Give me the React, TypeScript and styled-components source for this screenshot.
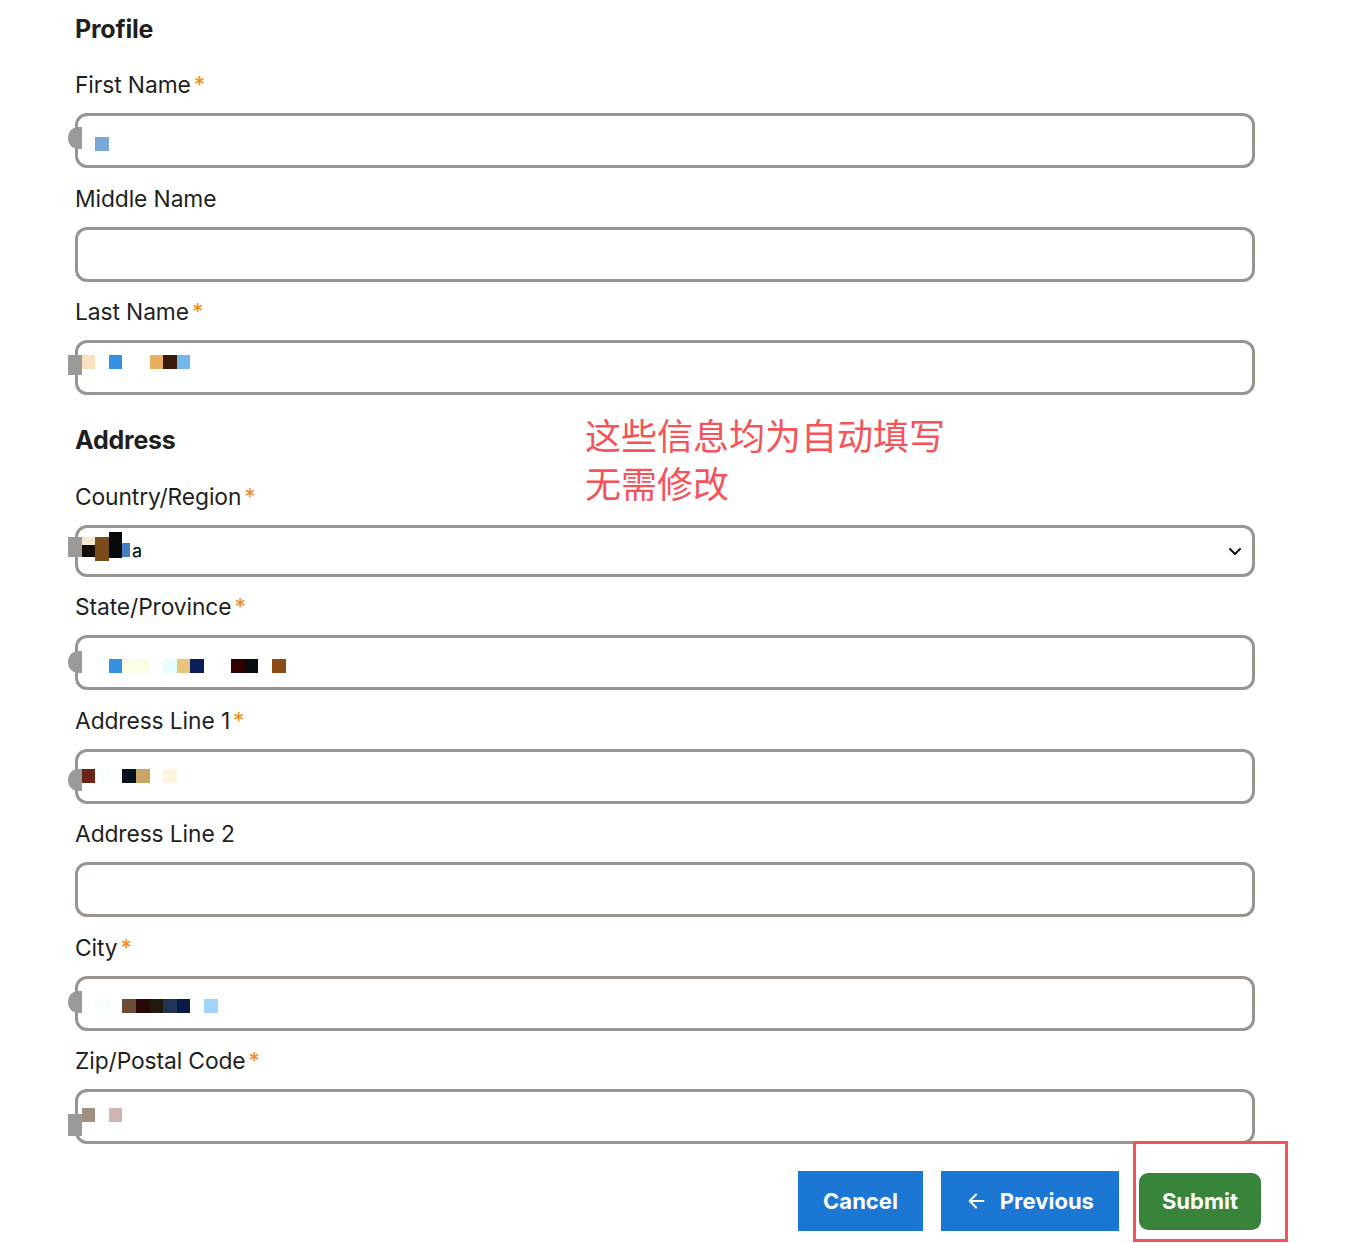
import React from "react";
import styled, { createGlobalStyle } from "styled-components";

const GlobalStyle = createGlobalStyle`
  html, body {
    margin: 0;
    padding: 0;
    background: #ffffff;
  }
  body {
    font-family: Inter, "Noto Sans", sans-serif;
    color: #1f1f1f;
  }
`;

const Page = styled.div`
  position: relative;
  width: 1360px;
  min-height: 1243px;
  box-sizing: border-box;
  padding: 14px 0 0 75px;
`;

const Form = styled.form`
  width: 1180px;
  display: flex;
  flex-direction: column;
`;

const SectionTitle = styled.h2<{ $top?: number; $bottom?: number }>`
  margin: ${(p) => p.$top ?? 0}px 0 ${(p) => p.$bottom ?? 27}px;
  font-size: 25px;
  font-weight: 700;
  line-height: 30px;
  letter-spacing: -0.2px;
`;

const FieldList = styled.div`
  display: flex;
  flex-direction: column;
  gap: 16.5px;
`;

const Field = styled.div`
  display: flex;
  flex-direction: column;
`;

const Label = styled.label`
  font-size: 22.8px;
  line-height: 28px;
  margin-bottom: 14px;
  letter-spacing: -0.1px;
`;

const Required = styled.span`
  color: #f28c0f;
  margin-left: 3px;
`;

const InputWrap = styled.div`
  position: relative;
`;

const TextInput = styled.input`
  display: block;
  width: 100%;
  height: 55px;
  box-sizing: border-box;
  border: 3px solid #9a948f;
  border-radius: 12px;
  background: #fff;
  font: inherit;
  font-size: 18px;
  padding: 0 16px;
  outline: none;
`;

const Select = styled.select`
  display: block;
  width: 100%;
  height: 52px;
  box-sizing: border-box;
  border: 3px solid #9a948f;
  border-radius: 12px;
  background: #fff;
  appearance: none;
  font-family: Inter, sans-serif;
  font-size: 18px;
  color: #000;
  padding: 0 0 0 54px;
  outline: none;
`;

const Chevron = styled.svg`
  position: absolute;
  right: 12px;
  top: 50%;
  transform: translateY(-50%);
  pointer-events: none;
`;

/* mosaic blur left over the auto-filled values, laid over the input */
const Mosaic = styled.div<{ $top: number }>`
  position: absolute;
  left: -7px;
  top: ${(p) => p.$top}px;
  display: flex;
  align-items: flex-start;
  pointer-events: none;
`;

const Cell = styled.span<{ $c?: string; $h?: number; $w?: number }>`
  flex: none;
  width: ${(p) => p.$w ?? 13.6}px;
  height: ${(p) => p.$h ?? 14}px;
  background: ${(p) => p.$c ?? "transparent"};
`;

const Nub = styled.span<{ $round?: boolean; $shift: number; $h: number }>`
  flex: none;
  width: 13.6px;
  height: ${(p) => p.$h}px;
  margin-top: ${(p) => p.$shift}px;
  background: #9c9a98;
  border-radius: ${(p) => (p.$round ? "10px 0 0 10px" : "0")};
`;

const Stack = styled.span<{ $shift?: number }>`
  flex: none;
  display: flex;
  flex-direction: column;
  margin-top: ${(p) => p.$shift ?? 0}px;
`;

const Actions = styled.div`
  position: relative;
  display: flex;
  justify-content: flex-end;
  align-items: center;
  gap: 18px;
  margin: 27px -6px 0 0;
`;

const Button = styled.button<{ $variant: "blue" | "green" }>`
  display: inline-flex;
  align-items: center;
  justify-content: center;
  gap: 12px;
  height: ${(p) => (p.$variant === "green" ? 57 : 60)}px;
  padding: 0 ${(p) => (p.$variant === "green" ? 23 : 25)}px;
  border: none;
  border-radius: ${(p) => (p.$variant === "green" ? "9px" : "0")};
  background: ${(p) => (p.$variant === "green" ? "#38843b" : "#1b77d3")};
  color: #fff;
  font-family: Inter, sans-serif;
  font-size: 22px;
  font-weight: 700;
  margin-left: ${(p) => (p.$variant === "green" ? 2 : 0)}px;
  cursor: pointer;
`;

const Highlight = styled.div`
  position: absolute;
  right: -27px;
  top: -30px;
  width: 155px;
  height: 101px;
  box-sizing: border-box;
  border: 3px solid #f5535a;
  pointer-events: none;
`;

const Note = styled.div`
  position: absolute;
  left: 585px;
  top: 410px;
  color: #f5535a;
  font-family: "Noto Sans CJK SC", sans-serif;
  font-size: 36px;
  line-height: 48px;
  white-space: pre;
`;

type Blur = {
  top: number;
  nub: { shift: number; h: number; round?: boolean };
  cells: Record<number, string>;
};

type FieldDef = {
  label: string;
  required?: boolean;
  select?: boolean;
  blur?: Blur;
};

const profile: FieldDef[] = [
  {
    label: "First Name",
    required: true,
    blur: { top: 24, nub: { shift: -10, h: 22, round: true }, cells: { 2: "#77a8d8" } },
  },
  { label: "Middle Name" },
  {
    label: "Last Name",
    required: true,
    blur: {
      top: 15,
      nub: { shift: 0, h: 20 },
      cells: { 1: "#f8e0c0", 3: "#3590e0", 6: "#e6b060", 7: "#3a1a08", 8: "#70b8e8" },
    },
  },
];

const address: FieldDef[] = [
  { label: "Country/Region", required: true, select: true },
  {
    label: "State/Province",
    required: true,
    blur: {
      top: 24,
      nub: { shift: -8, h: 22, round: true },
      cells: {
        3: "#3590e0",
        4: "#fdfde6",
        5: "#fdfde6",
        7: "#e8fdfd",
        8: "#e8c47c",
        9: "#0a1e5c",
        12: "#300000",
        13: "#060c10",
        15: "#8a4c14",
      },
    },
  },
  {
    label: "Address Line 1",
    required: true,
    blur: {
      top: 20,
      nub: { shift: 0, h: 22, round: true },
      cells: { 1: "#6a2418", 2: "#f8feff", 4: "#06101e", 5: "#c8a468", 7: "#fdf4e0" },
    },
  },
  { label: "Address Line 2" },
  {
    label: "City",
    required: true,
    blur: {
      top: 23,
      nub: { shift: -8, h: 22, round: true },
      cells: {
        2: "#f8fdfd",
        4: "#6a4c34",
        5: "#2a0808",
        6: "#201808",
        7: "#203454",
        8: "#0a1a48",
        10: "#a0d4f8",
      },
    },
  },
  {
    label: "Zip/Postal Code",
    required: true,
    blur: {
      top: 19,
      nub: { shift: 6, h: 22 },
      cells: { 1: "#a09080", 3: "#d0b4b0" },
    },
  },
];

const BlurRow = ({ blur }: { blur: Blur }) => {
  const last = Math.max(...Object.keys(blur.cells).map(Number));
  const cols = Array.from({ length: last }, (_, i) => i + 1);
  return (
    <Mosaic $top={blur.top}>
      <Nub $round={blur.nub.round} $shift={blur.nub.shift} $h={blur.nub.h} />
      {cols.map((i) => (
        <Cell key={i} $c={blur.cells[i]} />
      ))}
    </Mosaic>
  );
};

const CountryBlur = () => (
  <Mosaic $top={12}>
    <Nub $shift={0} $h={20} />
    <Stack>
      <Cell $c="#f6e6d0" $h={8} />
      <Cell $c="#140c04" $h={12} />
    </Stack>
    <Cell $c="#7a4c1c" $h={24} />
    <Stack $shift={-5}>
      <Cell $c="#05090c" $h={26} />
    </Stack>
    <Stack $shift={6}>
      <Cell $c="#4280c0" $h={14} $w={8} />
    </Stack>
  </Mosaic>
);

const renderField = (f: FieldDef) => (
  <Field key={f.label}>
    <Label>
      {f.label}
      {f.required && <Required>*</Required>}
    </Label>
    <InputWrap>
      {f.select ? (
        <>
          <Select defaultValue="a">
            <option value="a">a</option>
          </Select>
          <Chevron width="16" height="16" viewBox="0 0 16 16" fill="none">
            <path d="M3 6l5 5 5-5" stroke="#111" strokeWidth="2" strokeLinecap="round" strokeLinejoin="round" />
          </Chevron>
          <CountryBlur />
        </>
      ) : (
        <>
          <TextInput type="text" />
          {f.blur && <BlurRow blur={f.blur} />}
        </>
      )}
    </InputWrap>
  </Field>
);

const App = () => {
  return (
    <>
      <GlobalStyle />
      <Page>
        <Form onSubmit={(e) => e.preventDefault()}>
          <SectionTitle>Profile</SectionTitle>
          <FieldList>{profile.map(renderField)}</FieldList>

          <SectionTitle $top={30} $bottom={27.5}>
            Address
          </SectionTitle>
          <FieldList>{address.map(renderField)}</FieldList>

          <Actions>
            <Button type="button" $variant="blue">
              Cancel
            </Button>
            <Button type="button" $variant="blue">
              <svg width="22" height="22" viewBox="0 0 24 24" fill="none">
                <path d="M19 12H5M11 5l-7 7 7 7" stroke="#fff" strokeWidth="2.2" strokeLinecap="round" strokeLinejoin="round" />
              </svg>
              Previous
            </Button>
            <Button type="submit" $variant="green">
              Submit
            </Button>
            <Highlight />
          </Actions>
        </Form>
        <Note>{"这些信息均为自动填写\n无需修改"}</Note>
      </Page>
    </>
  );
};

export default App;
